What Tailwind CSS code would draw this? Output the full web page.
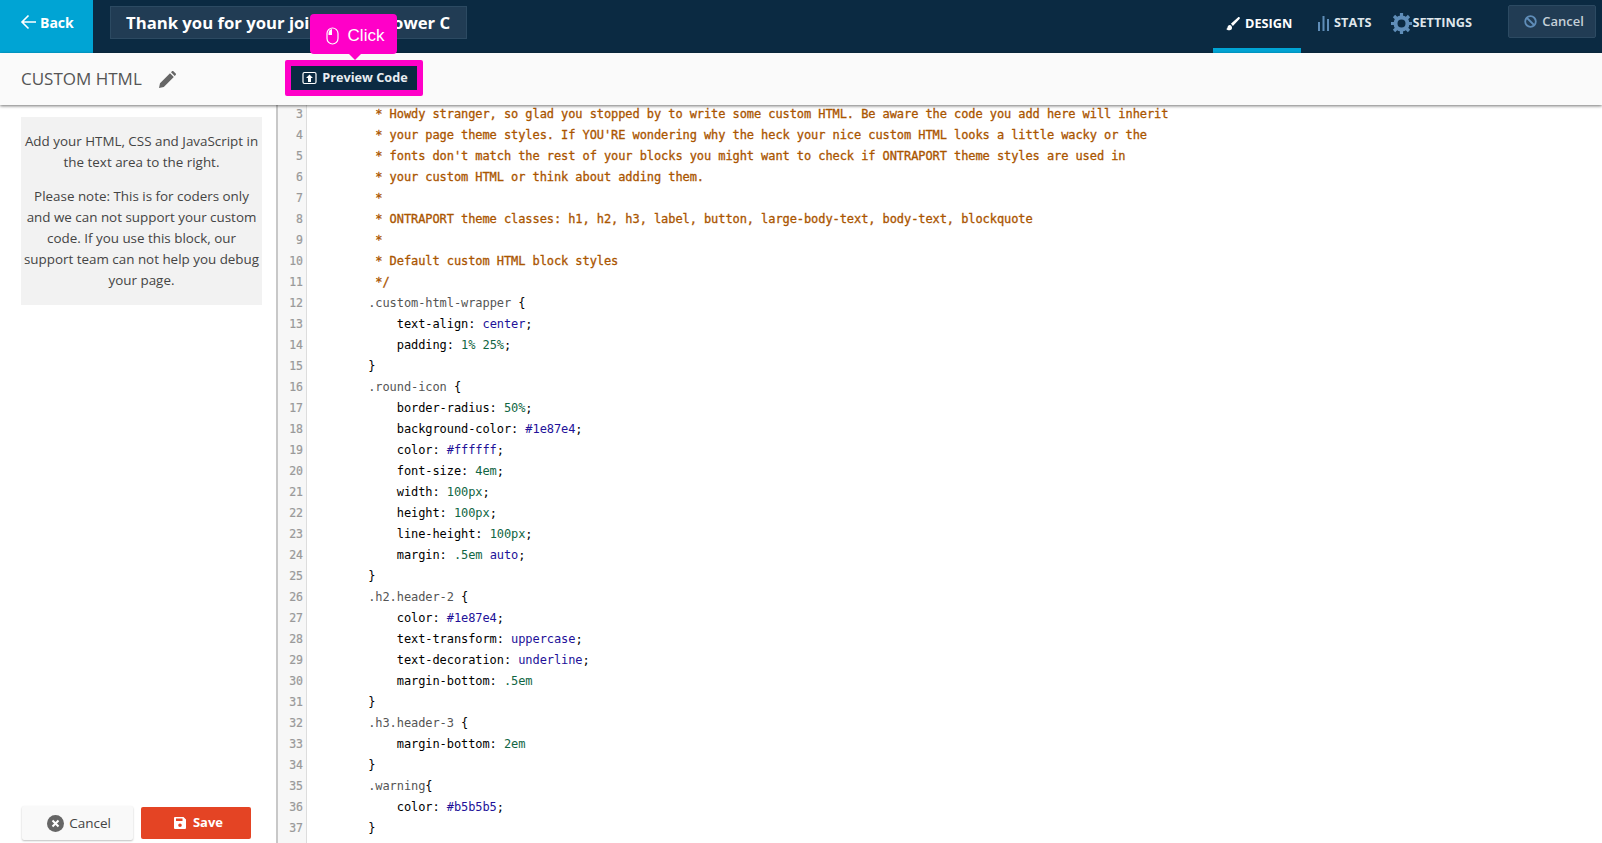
<!DOCTYPE html>
<html lang="en">
<head>
    <meta charset="UTF-8">
    <title>Custom HTML</title>
    <script src="https://cdn.jsdelivr.net/npm/@tailwindcss/browser@4"></script>
</head>
<body class="bg-white h-[843px] overflow-hidden font-['Open_Sans',sans-serif] relative">
    <!-- Top bar -->
    <header class="h-[53px] bg-[#0b2a42] flex items-stretch">
        <a class="w-[93px] bg-[#00a4d4] flex items-center pl-[20px] pb-[9px] text-white font-bold text-[14px]">
            <svg class="w-[17px] h-[16px] mr-[3px]" viewBox="0 0 17 16" fill="none" stroke="white" stroke-width="1.6"><path d="M16 8H2M8.500 1.500 2 8l6.500 6.500"/></svg>
            Back
        </a>
        <div class="ml-[17px] mt-[6px] w-[357px] h-[33px] bg-[#213c54] border border-[#2c4a62] pl-[15px] text-white font-bold text-[16.700px] leading-[31px] whitespace-nowrap overflow-hidden">Thank you for your joining the Power C</div>
        <div class="ml-auto flex items-stretch">
            <div class="w-[88px] border-b-[5px] border-[#00a4d4] flex items-center pl-[13px] text-white font-bold text-[12.700px]">
                <svg class="w-[14px] h-[14px] mr-[5px]" viewBox="0 0 14 14" fill="white"><path d="M13.600.4c-.5-.5-1.200-.4-1.700 0L5.400 6.200c-.3.3-.5.5-.6.9.9.2 1.600.9 1.900 1.800.4-.1.7-.4.9-.7L13.500 2c.5-.5.6-1.200.1-1.600zM3.900 8C2.300 8 1.700 9.300 1.500 10.400c-.1.800-.6 1.300-1.300 1.500 1 1.300 2.700 1.700 4.200 1.200 1.500-.5 1.800-2 1.500-3.200C5.600 8.800 4.900 8 3.900 8z"/></svg>
                DESIGN
            </div>
            <div class="ml-[17px] pb-[7px] flex items-center text-[#dfe6eb] font-bold text-[12.700px]">
                <svg class="w-[11px] h-[15px] mr-[5px]" viewBox="0 0 11 15" fill="#5f8db8"><rect x="0" y="6" width="2" height="9"/><rect x="4.500" y="0" width="2" height="15"/><rect x="9" y="3" width="2" height="12"/></svg>
                STATS
            </div>
            <div class="ml-[19px] pb-[7px] flex items-center text-[#dfe6eb] font-bold text-[12.700px]">
                <svg class="w-[21px] h-[21px] mr-[1px]" viewBox="0 0 21 21"><circle cx="10.500" cy="10.500" r="6" fill="none" stroke="#5f8db8" stroke-width="4"/><path stroke="#5f8db8" stroke-width="3.200" d="M10.500 0v4M10.500 17v4M0 10.500h4M17 10.500h4M3 3l3 3M15 15l3 3M18 3l-3 3M6 15l-3 3"/></svg>
                SETTINGS
            </div>
            <button class="ml-[36px] mr-[6px] mt-[5px] w-[88px] h-[33px] pl-[4px] bg-[#213c54] border border-[#2c4a62] rounded-[2px] flex items-center justify-center text-[#c5d0d8] font-semibold text-[13px]">
                <svg class="w-[13px] h-[13px] mr-[5px]" viewBox="0 0 13 13" fill="none" stroke="#5f8db8" stroke-width="1.800"><circle cx="6.500" cy="6.500" r="5.300"/><path d="M3 3l7 7"/></svg>
                Cancel
            </button>
        </div>
    </header>

    <!-- Sub bar -->
    <div class="relative z-10 h-[52px] bg-[#fafafa] shadow-[0_1px_3px_rgba(0,0,0,0.55)] flex items-center pl-[21px]">
        <div class="w-[270px] flex items-center">
            <span class="text-[#555555] text-[17px]">CUSTOM HTML</span>
            <svg class="w-[17px] h-[17px] ml-[17px]" viewBox="0 0 17 17" fill="#666666"><path d="M0 17l1-4.800L11 2.200 14.800 6 4.800 16zM12 1.200 13 .3c.4-.4 1-.4 1.400 0l2.300 2.300c.4.4.4 1 0 1.400l-1 1z"/></svg>
        </div>
        <button class="w-[126px] h-[24px] mb-[2px] pl-[2px] bg-[#0b2a42] flex items-center justify-center text-[#e8edf1] font-bold text-[12.700px]">
            <svg class="w-[15px] h-[14px] mr-[5px]" viewBox="0 0 15 14" fill="none" stroke="white" stroke-width="1.200"><rect x="1" y="1.500" width="13" height="11" rx="1.500"/><path fill="white" stroke="none" d="M7.500 3.500 11 7H9v4H6V7H4z"/></svg>
            Preview Code
        </button>
    </div>

    <main class="flex h-[738px]">
        <!-- Left panel -->
        <aside class="w-[278px] shrink-0 border-r-2 border-[#c8c8c8] flex flex-col justify-between pl-[21px] pb-[3px] pt-[12px]">
            <div class="w-[241px] h-[188px] bg-[#f2f2f2] text-center text-[#444444] text-[13.400px] leading-[21px] pt-[14px]">
                <p class="mb-[13px]">Add your HTML, CSS and JavaScript in the text area to the right.</p>
                <p>Please note: This is for coders only and we can not support your custom code. If you use this block, our support team can not help you debug your page.</p>
            </div>
            <div class="flex gap-[8px] items-center pl-[1px]">
                <button class="w-[111px] h-[34px] pl-[3px] bg-[#f9f9f9] rounded-[2px] shadow-[0_1px_2px_rgba(0,0,0,0.25)] flex items-center justify-center text-[#444444] text-[13.500px]">
                    <svg class="w-[17px] h-[17px] mr-[5px]" viewBox="0 0 17 17"><circle cx="8.500" cy="8.500" r="8.500" fill="#666666"/><path d="M5.500 5.500l6 6M11.500 5.500l-6 6" stroke="white" stroke-width="2"/></svg>
                    Cancel
                </button>
                <button class="w-[110px] h-[32px] pl-[5px] bg-[#e44424] rounded-[2px] flex items-center justify-center text-white font-bold text-[13px]">
                    <svg class="w-[12px] h-[12px] mr-[7px]" viewBox="0 0 12 12" fill="white"><path d="M0 1a1 1 0 0 1 1-1h8.500L12 2.500V11a1 1 0 0 1-1 1H1a1 1 0 0 1-1-1zM2 1.500V4h6.500V1.500zM6 6.500a1.800 1.800 0 1 0 0 3.600 1.800 1.800 0 0 0 0-3.600z"/></svg>
                    Save
                </button>
            </div>
        </aside>

        <!-- Code editor -->
        <section class="flex-1 flex overflow-hidden -mt-[1px] font-['DejaVu_Sans_Mono',monospace] text-[12px] leading-[21px]">
            <div class="w-[29px] shrink-0 bg-[#f7f7f7] border-r border-[#dddddd] text-right pr-[3px] text-[#999999] text-[11.500px] [-webkit-text-stroke:0.2px_#999999]">
                <div>3</div><div>4</div><div>5</div><div>6</div><div>7</div><div>8</div><div>9</div><div>10</div><div>11</div><div>12</div><div>13</div><div>14</div><div>15</div><div>16</div><div>17</div><div>18</div><div>19</div><div>20</div><div>21</div><div>22</div><div>23</div><div>24</div><div>25</div><div>26</div><div>27</div><div>28</div><div>29</div><div>30</div><div>31</div><div>32</div><div>33</div><div>34</div><div>35</div><div>36</div><div>37</div>
            </div>
            <div class="pl-[4px] text-black tracking-[-0.08px] [&>div]:whitespace-pre">
                <div class="text-[#aa5500] [-webkit-text-stroke:0.3px_#aa5500]">         * Howdy stranger, so glad you stopped by to write some custom HTML. Be aware the code you add here will inherit</div>
                <div class="text-[#aa5500] [-webkit-text-stroke:0.3px_#aa5500]">         * your page theme styles. If YOU'RE wondering why the heck your nice custom HTML looks a little wacky or the</div>
                <div class="text-[#aa5500] [-webkit-text-stroke:0.3px_#aa5500]">         * fonts don't match the rest of your blocks you might want to check if ONTRAPORT theme styles are used in</div>
                <div class="text-[#aa5500] [-webkit-text-stroke:0.3px_#aa5500]">         * your custom HTML or think about adding them.</div>
                <div class="text-[#aa5500] [-webkit-text-stroke:0.3px_#aa5500]">         *</div>
                <div class="text-[#aa5500] [-webkit-text-stroke:0.3px_#aa5500]">         * ONTRAPORT theme classes: h1, h2, h3, label, button, large-body-text, body-text, blockquote</div>
                <div class="text-[#aa5500] [-webkit-text-stroke:0.3px_#aa5500]">         *</div>
                <div class="text-[#aa5500] [-webkit-text-stroke:0.3px_#aa5500]">         * Default custom HTML block styles</div>
                <div class="text-[#aa5500] [-webkit-text-stroke:0.3px_#aa5500]">         */</div>
                <div>        <span class="text-[#555555]">.custom-html-wrapper</span> {</div>
                <div>            text-align: <span class="text-[#221199]">center</span>;</div>
                <div>            padding: <span class="text-[#116644]">1% 25%</span>;</div>
                <div>        }</div>
                <div>        <span class="text-[#555555]">.round-icon</span> {</div>
                <div>            border-radius: <span class="text-[#116644]">50%</span>;</div>
                <div>            background-color: <span class="text-[#221199]">#1e87e4</span>;</div>
                <div>            color: <span class="text-[#221199]">#ffffff</span>;</div>
                <div>            font-size: <span class="text-[#116644]">4em</span>;</div>
                <div>            width: <span class="text-[#116644]">100px</span>;</div>
                <div>            height: <span class="text-[#116644]">100px</span>;</div>
                <div>            line-height: <span class="text-[#116644]">100px</span>;</div>
                <div>            margin: <span class="text-[#116644]">.5em</span> <span class="text-[#221199]">auto</span>;</div>
                <div>        }</div>
                <div>        <span class="text-[#555555]">.h2.header-2</span> {</div>
                <div>            color: <span class="text-[#221199]">#1e87e4</span>;</div>
                <div>            text-transform: <span class="text-[#221199]">uppercase</span>;</div>
                <div>            text-decoration: <span class="text-[#221199]">underline</span>;</div>
                <div>            margin-bottom: <span class="text-[#116644]">.5em</span></div>
                <div>        }</div>
                <div>        <span class="text-[#555555]">.h3.header-3</span> {</div>
                <div>            margin-bottom: <span class="text-[#116644]">2em</span></div>
                <div>        }</div>
                <div>        <span class="text-[#555555]">.warning</span>{</div>
                <div>            color: <span class="text-[#221199]">#b5b5b5</span>;</div>
                <div>        }</div>
            </div>
        </section>
    </main>

    <!-- Tutorial highlight -->
    <div class="absolute z-20 left-[285px] top-[60px] w-[138px] h-[36px] border-[6px] border-[#ff00c8] rounded-[2px]"></div>
    <div class="absolute z-30 left-[310px] top-[14px] w-[87px] h-[40px] pt-[3px] pl-[3px] bg-[#ff00c8] rounded-[4px] flex items-center justify-center text-white text-[17px] font-['Liberation_Sans',sans-serif]">
        <svg class="w-[13px] h-[18px] mr-[9px]" viewBox="0 0 13 18" fill="none" stroke="white" stroke-width="1.200"><rect x="1" y="1" width="11" height="16" rx="5.500"/><path fill="white" stroke="none" d="M6 2C4 2.200 2.500 3.800 2.500 6.500V8H6z"/></svg>
        Click
    </div>
    <div class="absolute z-30 left-[349px] top-[54px] w-0 h-0 border-l-[6px] border-r-[6px] border-t-[6px] border-l-transparent border-r-transparent border-t-[#ff00c8]"></div>
</body>
</html>
